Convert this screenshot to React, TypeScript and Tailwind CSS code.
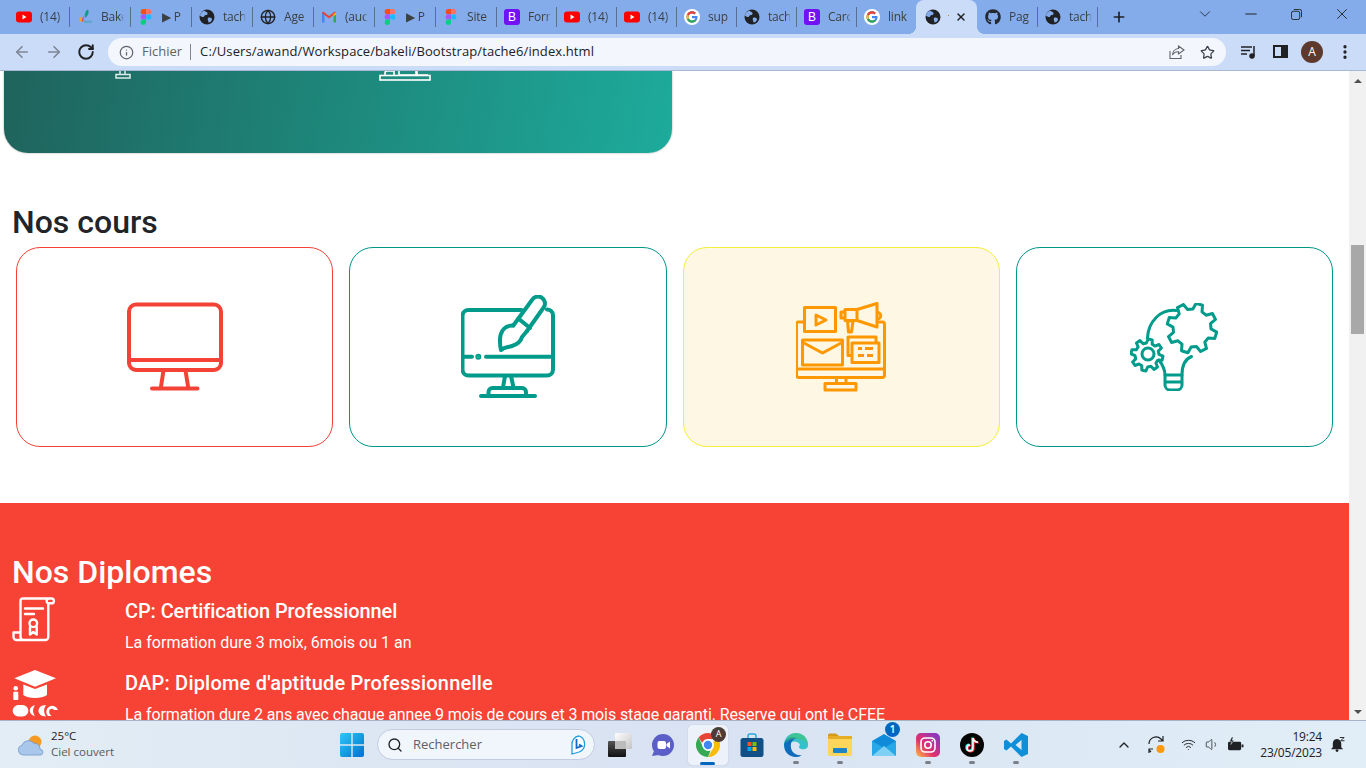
import { Globe, Info, X, Plus, ChevronDown, ChevronUp, Minus, ArrowLeft, ArrowRight, RotateCw, Star, Search, MoreVertical, Wifi, Volume1 } from "lucide-react";
import { FaGithub } from "react-icons/fa";
import type { ReactNode } from "react";

const UI = "font-['Open_Sans','Noto_Sans',sans-serif]";

function YouTube() {
  return (
    <svg viewBox="0 0 16 16" className="w-4 h-4">
      <rect x="0" y="2.5" width="16" height="11" rx="3" fill="#f00" />
      <path d="M6.5 5.5 L10.5 8 L6.5 10.5 Z" fill="#fff" />
    </svg>
  );
}

function FigmaIcon() {
  return (
    <svg viewBox="0 0 16 16" className="w-4 h-4">
      <path d="M5.3 0 H8 V5.3 H5.3 a2.65 2.65 0 0 1 0-5.3Z" fill="#f24e1e" />
      <path d="M8 0 h2.7 a2.65 2.65 0 0 1 0 5.3 H8Z" fill="#ff7262" />
      <path d="M5.3 5.3 H8 V10.6 H5.3 a2.65 2.65 0 0 1 0-5.3Z" fill="#a259ff" />
      <circle cx="10.7" cy="8" r="2.65" fill="#1abcfe" />
      <path d="M5.3 10.6 H8 v2.7 a2.65 2.65 0 1 1-2.7-2.7Z" fill="#0acf83" />
    </svg>
  );
}

function DarkGlobe() {
  return (
    <svg viewBox="0 0 16 16" className="w-4 h-4">
      <circle cx="8" cy="8" r="7.5" fill="#202124" />
      <path d="M5 1.5 C7 3 9 3 8.5 5 C8 6.5 5.5 5.5 5 7.5 C4.5 9 2 7 1 7 L1.5 4 Z" fill="#85ACEA" />
      <path d="M9 9 C11 8 13 9 13 10.5 C12.5 12.5 10.5 14 9.5 13.5 C9.5 11.5 8 10.5 9 9Z" fill="#85ACEA" />
    </svg>
  );
}

function Bakeli() {
  return (
    <svg viewBox="0 0 16 16" className="w-4 h-4">
      <path d="M8 9 C7 5 9 1 11 0.5 C12.5 3 11 7 8 9Z" fill="#0f9d84" />
      <path d="M3 9 C4.5 7 5.5 8 5 11 L4 13 C3 12 2.5 11 3 9Z" fill="#f2a51f" />
      <path d="M6 7 C7 9 6.5 11 6 13 L5 12Z" fill="#e53935" />
      <rect x="7" y="11.5" width="8" height="2.6" fill="#5aa5c9" opacity="0.8" />
    </svg>
  );
}

function Gmail() {
  return (
    <svg viewBox="0 0 16 16" className="w-4 h-4">
      <path d="M1 13.5 V4 L3.5 5 V13.5Z" fill="#4285f4" />
      <path d="M12.5 13.5 V5 L15 4 V13.5Z" fill="#34a853" />
      <path d="M1 4 Q1 2.2 2.6 2.8 L8 7 L13.4 2.8 Q15 2.2 15 4 L12.5 6 L8 9.5 L3.5 6Z" fill="#ea4335" />
      <path d="M12.5 5 L15 3.4 V5.5 L12.5 7.4Z" fill="#fbbc04" />
    </svg>
  );
}

function Bootstrap() {
  return (
    <div className="w-4 h-4 rounded-[3px] bg-[#7211f3] flex items-center justify-center text-white text-[12px] leading-none font-medium font-['Liberation_Sans',sans-serif]">
      B
    </div>
  );
}

function Google() {
  return (
    <svg viewBox="0 0 16 16" className="w-4 h-4">
      <circle cx="8" cy="8" r="8" fill="#fff" />
      <path d="M8 6.9 V9.2 H11.4 C11.1 10.5 9.9 11.4 8 11.4 C6.1 11.4 4.6 9.9 4.6 8 C4.6 6.1 6.1 4.6 8 4.6 C8.9 4.6 9.6 4.9 10.2 5.4 L11.9 3.8 C10.9 2.9 9.6 2.3 8 2.3 C4.9 2.3 2.4 4.9 2.4 8 C2.4 11.1 4.9 13.7 8 13.7 C11.3 13.7 13.5 11.4 13.5 8.1 C13.5 7.7 13.5 7.3 13.4 6.9Z" fill="#4285f4" />
      <path d="M3 5.4 L4.9 6.8 C5.4 5.5 6.6 4.6 8 4.6 C8.9 4.6 9.6 4.9 10.2 5.4 L11.9 3.8 C10.9 2.9 9.6 2.3 8 2.3 C5.8 2.3 3.9 3.5 3 5.4Z" fill="#ea4335" />
      <path d="M3 10.6 C3.9 12.5 5.8 13.7 8 13.7 C9.6 13.7 10.9 13.2 11.8 12.3 L10 10.8 C9.5 11.2 8.8 11.4 8 11.4 C6.6 11.4 5.4 10.5 4.9 9.2Z" fill="#34a853" />
      <path d="M3 5.4 C2.6 6.2 2.4 7.1 2.4 8 C2.4 8.9 2.6 9.8 3 10.6 L4.9 9.2 C4.7 8.8 4.6 8.4 4.6 8 C4.6 7.6 4.7 7.2 4.9 6.8Z" fill="#fbbc05" />
    </svg>
  );
}

type TabData = { icon: ReactNode; label: string; w: string };

const tabs: TabData[] = [
  { icon: <YouTube />, label: "(14)", w: "w-[61px]" },
  { icon: <Bakeli />, label: "Bake", w: "w-[61px]" },
  { icon: <FigmaIcon />, label: "▶ P", w: "w-[61px]" },
  { icon: <DarkGlobe />, label: "tach", w: "w-[61px]" },
  { icon: <Globe className="w-4 h-4 text-[#202124]" strokeWidth={2} />, label: "Age", w: "w-[61px]" },
  { icon: <Gmail />, label: "(auc", w: "w-[61px]" },
  { icon: <FigmaIcon />, label: "▶ P", w: "w-[61px]" },
  { icon: <FigmaIcon />, label: "Site", w: "w-[61px]" },
  { icon: <Bootstrap />, label: "Forr", w: "w-[60px]" },
  { icon: <YouTube />, label: "(14)", w: "w-[60px]" },
  { icon: <YouTube />, label: "(14)", w: "w-[60px]" },
  { icon: <Google />, label: "sup", w: "w-[60px]" },
  { icon: <DarkGlobe />, label: "tach", w: "w-[60px]" },
  { icon: <Bootstrap />, label: "Carc", w: "w-[60px]" },
  { icon: <Google />, label: "link", w: "w-[60px]" },
];

function Tab({ icon, label, w, last }: TabData & { last?: boolean }) {
  return (
    <div className={`${w} h-[34px] flex items-center pl-2 shrink-0 relative`}>
      <div className="w-4 h-4 shrink-0">{icon}</div>
      <div className="ml-2 w-[23px] overflow-hidden whitespace-nowrap text-[12px] tracking-[-0.2px] text-[#3c4043] [mask-image:linear-gradient(to_right,black_80%,transparent)]">
        {label}
      </div>
      {!last && <div className="absolute right-[-1px] top-[7px] h-5 w-px bg-[#5a6f8f]" />}
    </div>
  );
}

function TabStrip() {
  return (
    <div className="h-[34px] bg-[#85acea] flex pl-2 shrink-0">
      {tabs.map((t, i) => (
        <Tab key={i} {...t} last={i === tabs.length - 1} />
      ))}
      <div className="w-[61px] h-[34px] shrink-0 bg-[#cbdcf8] rounded-t-lg relative flex items-center pl-[9px]">
        <div className="absolute -left-2 bottom-0 w-2 h-2 bg-[radial-gradient(circle_at_0_0,#85acea_8px,#cbdcf8_8px)]" />
        <div className="absolute -right-2 bottom-0 w-2 h-2 bg-[radial-gradient(circle_at_100%_0,#85acea_8px,#cbdcf8_8px)]" />
        <DarkGlobe />
        <div className="absolute left-[32px] top-[15px] w-px h-px bg-[#c8742c]" />
        <X className="absolute left-[39px] top-[11px] w-[12px] h-[12px] text-[#202124]" strokeWidth={3} />
      </div>
      <Tab icon={<FaGithub className="w-4 h-4 text-[#24292f]" />} label="Pag" w="w-[60px]" />
      <Tab icon={<DarkGlobe />} label="tach" w="w-[60px]" />
      <Plus className="ml-[14px] mt-[9px] w-[16px] h-[16px] text-[#202124]" strokeWidth={2.5} />
      <ChevronDown className="ml-[69px] mt-[5px] w-[18px] h-[18px] text-[#2b3648]" strokeWidth={1.3} />
      <Minus className="ml-[28px] mt-[5px] w-[18px] h-[18px] text-[#202124]" strokeWidth={1.3} />
      <svg viewBox="0 0 12 12" className="ml-[31px] mt-[9px] w-[11px] h-[11px] text-[#202124]" fill="none" stroke="currentColor">
        <rect x="0.5" y="2.5" width="9" height="9" rx="2" />
        <path d="M3 0.5 H9.5 a2 2 0 0 1 2 2 V9" />
      </svg>
      <X className="ml-[31px] mt-[5px] w-[18px] h-[18px] text-[#202124]" strokeWidth={1.2} />
    </div>
  );
}

function Toolbar() {
  return (
    <div className="h-[37px] bg-[#cbdcf8] border-b border-[#a8b7d4] flex items-start shrink-0 pt-[4px]">
      <ArrowLeft className="ml-[13px] mt-[5px] w-[18px] h-[18px] text-[#7d8596]" strokeWidth={2.2} />
      <ArrowRight className="ml-[14px] mt-[5px] w-[18px] h-[18px] text-[#7d8596]" strokeWidth={2.2} />
      <RotateCw className="ml-[14px] mt-[5px] w-[18px] h-[18px] text-[#202124]" strokeWidth={2.6} />
      <div className="ml-[13px] w-[1118px] h-[28px] bg-[#f3f6fc] rounded-full flex items-center pl-[11px] relative">
        <Info className="w-[15px] h-[15px] text-[#5f6368]" strokeWidth={2} />
        <span className="ml-[8px] text-[13px] text-[#5f6368]">Fichier</span>
        <div className="ml-[8px] w-px h-[16px] bg-[#80868b]" />
        <span className="ml-[9px] text-[13px] tracking-[0.1px] text-[#202124]">C:/Users/awand/Workspace/bakeli/Bootstrap/tache6/index.html</span>
        <svg viewBox="0 0 16 16" className="absolute right-[41px] top-[6px] w-4 h-4 text-[#5f6368]" fill="none" stroke="currentColor" strokeWidth="1.1">
          <path d="M1 7 V14.5 H12 V11" />
          <path d="M9.5 2 L15 6 L9.5 10 V7.7 C6.5 7.5 4.5 9 3.5 11 C3.5 7.5 6 4.8 9.5 4.5Z" />
        </svg>
        <Star className="absolute right-[11px] top-[7px] w-[15px] h-[15px] text-[#3c4043]" strokeWidth={2} />
      </div>
      <svg viewBox="0 0 16 16" className="ml-[14px] mt-[6px] w-4 h-4 text-[#202124]" fill="none" stroke="currentColor" strokeWidth="1.5">
        <path d="M1 3 H12 M1 6.5 H10 M1 10 H7 M14 2 V12" />
        <circle cx="12" cy="12" r="2" fill="currentColor" />
      </svg>
      <div className="ml-[17px] mt-[7px] w-[15px] h-[13px] border-2 border-[#202124] flex justify-end">
        <div className="w-[5px] bg-[#202124]" />
      </div>
      <div className="ml-[13px] mt-[3px] w-[22px] h-[22px] rounded-full bg-[#5e3a2e] text-white text-[12px] flex items-center justify-center">A</div>
      <MoreVertical className="ml-[13px] mt-[5px] w-[18px] h-[18px] text-[#202124]" strokeWidth={2.4} />
    </div>
  );
}

function MonitorIcon() {
  return (
    <svg width="96" height="90" viewBox="0 0 96 90" fill="none" stroke="#f44336" strokeWidth="4" strokeLinecap="round" strokeLinejoin="round">
      <rect x="2" y="2.5" width="92" height="65.5" rx="7" />
      <path d="M2 58 H94" />
      <path d="M36.5 68.5 L33.8 86 M58.5 68.5 L61.3 86 M25 86.5 H70.5" />
    </svg>
  );
}

function DesignIcon() {
  return (
    <svg width="94" height="104" viewBox="0 0 94 104" fill="none" stroke="#009b8a" strokeWidth="4" strokeLinecap="round" strokeLinejoin="round">
      <path d="M60.5 15 H7.5 a6 6 0 0 0-6 6 V74.5 a6 6 0 0 0 6 6 H86 a6 6 0 0 0 6-6 V20 a6 6 0 0 0-6-5.5" />
      <path d="M2 61.7 H11 M25 61.7 H92" />
      <circle cx="17.3" cy="61.7" r="1" fill="#009b8a" />
      <path d="M44 81 L42 92.5 M50 81 L52.5 92.5" />
      <path d="M27.5 100.5 V97 a4 4 0 0 1 4-4 H61 a4 4 0 0 1 4 4 V100.5" />
      <path d="M20 101 H74" />
      <path d="M52.3 30.5 L71 5 a6.4 6.4 0 0 1 12 7 L66 36" />
      <path d="M57.3 23.5 L69 33" />
      <path d="M52.3 30.5 C44 30 39.5 36 39 44 C38.8 49 39.2 52 40 55 C43 52 46.5 52.5 51 51 C57 49 60 46 61 42 L66 36" />
    </svg>
  );
}

function MarketingIcon() {
  return (
    <svg width="90" height="90" viewBox="0 0 90 90" fill="none" stroke="#ff9800" strokeWidth="3" strokeLinejoin="round">
      <path d="M7 20 H2.5 a2 2 0 0 0-2 2 V73 a2.5 2.5 0 0 0 2.5 2.5 H86 a2.5 2.5 0 0 0 2.5-2.5 V22 a2 2 0 0 0-2-2 H82" />
      <path d="M1 67 H88" />
      <path d="M40.5 76 V82 M50 76 V82" />
      <rect x="29" y="81.5" width="31" height="6.5" />
      <rect x="8.5" y="5.5" width="31" height="24" />
      <path d="M20 13 L30 18 L20 23Z" />
      <path d="M49 7.5 H61 L81 1.5 V25 L61 18.5 H49Z" />
      <path d="M61 8 V18" />
      <path d="M49 10 H45 V16 H49" />
      <path d="M81.5 10.5 a3.2 3.2 0 0 1 0 6.5" />
      <path d="M51.5 19 H57 L55.5 30 H52.5Z" />
      <rect x="6.5" y="38" width="40" height="25" />
      <path d="M7 40.5 L26.5 51 L46 40.5" />
      <path d="M55.5 53.5 H52 V35 H80 V41" />
      <rect x="56" y="41" width="27" height="19.5" />
      <path d="M62 46.5 H66 M69 46.5 H77 M62 53.5 H68 M71 53.5 H77" />
    </svg>
  );
}

function gear(cx: number, cy: number, r1: number, r2: number, n: number, rot = 0) {
  const pts: string[] = [];
  for (let i = 0; i < n; i++) {
    const a = rot + (i / n) * Math.PI * 2;
    const s = (Math.PI * 2) / n;
    [[-0.32, r2], [-0.17, r1], [0.17, r1], [0.32, r2]].forEach(([o, r]) => {
      const t = a + o * s;
      pts.push(`${(cx + Math.cos(t) * r).toFixed(1)},${(cy + Math.sin(t) * r).toFixed(1)}`);
    });
  }
  return pts.join(" ");
}

function IdeaIcon() {
  return (
    <svg width="88" height="88" viewBox="0 0 88 88" fill="none" stroke="#009b8a" strokeWidth="3" strokeLinecap="round" strokeLinejoin="round">
      <polygon points={gear(62, 25, 25, 19, 8, 0.3)} fill="#fff" />
      <polygon points={gear(17, 52, 16, 12, 8, 0.2)} />
      <path d="M46 7.5 C30 6 18 19 17.5 35" />
      <circle cx="18" cy="51" r="6" />
      <path d="M29 57 C32 61 35 65 35 72 M61.5 53.5 C55 56 52 63 52 72" />
      <path d="M35 72 H52 V82 a5 5 0 0 1-5 5 H40 a5 5 0 0 1-5-5Z M35 79 H52" />
    </svg>
  );
}

function DiplomaIcon() {
  return (
    <svg width="44" height="46" viewBox="0 0 44 46" fill="none" stroke="#fff" strokeWidth="2.4" strokeLinecap="round" strokeLinejoin="round" className="-mt-[2px]">
      <path d="M8.5 35 V4 a2.5 2.5 0 0 1 2.5-2.5 H39.5 a2.4 2.4 0 0 1 0 4.8 H36.3 V40 a3 3 0 0 1-3 3 H4.5 a3 3 0 0 1-3-3 V35.5 H8.5 M36 1.8 a2.5 2.5 0 0 0 0 4.5 M8.5 35.5 V40 a3 3 0 0 0 3 3" />
      <path d="M13 11.5 H31 M13 17 H22" />
      <circle cx="21.3" cy="26.3" r="3.8" />
      <path d="M18 30 V37.5 L21.3 35 L24.7 37.5 V30" />
    </svg>
  );
}

function GradIcon() {
  return (
    <svg width="50" height="52" viewBox="0 0 50 52" fill="#fff" className="-mt-[3px]">
      <path d="M2.3 10.3 L23 2 L44 10.3 L23 18.7Z" />
      <path d="M11.3 16.5 L23 21 L35 16.5 V27 C30 31 16 31 11.3 27Z" />
      <circle cx="3.7" cy="20.3" r="2.3" />
      <rect x="1.3" y="23.7" width="5" height="8.3" rx="1" />
      <rect x="0.7" y="37" width="15.6" height="11.5" rx="5.7" />
      <path d="M23 37 C16 39 16 46 23 48.5 C20.5 44 20.5 41 23 37Z M34 37 C24 37 24 48.5 34 48.5 C31.5 44 31.5 41 34 37Z" />
      <path d="M36 48 a6 6 0 1 1 10 -6 h-4 a3 3 0 0 0-4 -0.5 c-2 2 0 6 2 6.5Z" />
    </svg>
  );
}

function CourseCard({ border, bg, children }: { border: string; bg?: string; children: ReactNode }) {
  return (
    <div className={`h-[200px] rounded-[24px] border flex items-center justify-center ${border} ${bg ?? "bg-white"}`}>
      {children}
    </div>
  );
}

function Diplome({ icon, title, text, titleCls, textCls }: { icon: ReactNode; title: string; text: string; titleCls: string; textCls: string }) {
  return (
    <div className="flex">
      <div className="w-[113px] shrink-0">{icon}</div>
      <div>
        <h3 className={`text-[20px] leading-[24px] font-medium ${titleCls}`}>{title}</h3>
        <p className={`mt-[8px] text-[16px] leading-[24px] whitespace-nowrap ${textCls}`}>{text}</p>
      </div>
    </div>
  );
}

function Page() {
  return (
    <div className="flex-1 overflow-hidden bg-white text-[#212529] font-['Roboto',sans-serif]">
      <div className="ml-[4px] w-[668px] h-[82px] rounded-b-[24px] bg-[linear-gradient(100deg,#1f635c,#1dab9b)] shadow-[0_0_2px_rgba(0,0,0,0.4)] flex items-start">
        <svg width="20" height="8" viewBox="0 0 20 8" className="ml-[109px]" fill="none" stroke="#dfecea" strokeWidth="1.5">
          <path d="M7 0 V3 M12 0 V3" />
          <rect x="3" y="3.5" width="14" height="3.5" />
        </svg>
        <svg width="52" height="10" viewBox="0 0 52 10" className="ml-[246px]" fill="none" stroke="#fff" strokeWidth="1.6">
          <path d="M6 4 V2 a2 2 0 0 1 2-2 H15 V4 M20 0 V4 H37 V0 M38 0 V4 H49" />
          <rect x="1" y="4.5" width="50" height="4.5" />
        </svg>
      </div>
      <h2 className="mt-[50px] ml-[12px] text-[32px] leading-[38px] font-medium">Nos cours</h2>
      <div className="grid grid-cols-4 gap-4 pl-4 pr-4 mt-[6px]">
        <CourseCard border="border-[#f44336]"><MonitorIcon /></CourseCard>
        <CourseCard border="border-[#009688]"><DesignIcon /></CourseCard>
        <CourseCard border="border-[#f5ee3a]" bg="bg-[#fdf7e3]"><MarketingIcon /></CourseCard>
        <CourseCard border="border-[#009688]"><IdeaIcon /></CourseCard>
      </div>
      <section className="mt-[56px] bg-[#f64335] text-white pt-[50px] pl-[12px] h-[300px]">
        <h2 className="text-[32px] leading-[38px] font-medium">Nos Diplomes</h2>
        <div className="mt-[8px] flex flex-col gap-[16px]">
          <Diplome icon={<DiplomaIcon />} title="CP: Certification Professionnel" titleCls="tracking-[-0.1px]" text="La formation dure 3 moix, 6mois ou 1 an" textCls="" />
          <Diplome icon={<GradIcon />} title="DAP: Diplome d'aptitude Professionnelle" titleCls="tracking-[0.2px]" text="La formation dure 2 ans avec chaque annee 9 mois de cours et 3 mois stage garanti. Reserve qui ont le CFEE" textCls="tracking-[-0.1px]" />
        </div>
      </section>
    </div>
  );
}

function Scrollbar() {
  return (
    <div className="w-[17px] bg-[#f1f1f1] shrink-0 flex flex-col items-center relative">
      <div className="absolute top-[8px] w-0 h-0 border-x-[4px] border-x-transparent border-b-[4px] border-b-[#505050]" />
      <div className="mt-[174px] w-[13px] h-[89px] bg-[#a8a8a8]" />
      <div className="absolute bottom-[6px] w-0 h-0 border-x-[4px] border-x-transparent border-t-[4px] border-t-[#505050]" />
    </div>
  );
}

function TaskSlot({ children, dot, active }: { children: ReactNode; dot?: boolean; active?: boolean }) {
  return (
    <div className={`w-[40px] h-[40px] mr-[4px] rounded-[4px] relative flex items-center justify-center ${active ? "bg-[#edf2fa] shadow-[0_0_1px_rgba(0,0,0,0.3)]" : ""}`}>
      {children}
      {dot && <div className="absolute bottom-[1px] left-[17px] w-[6px] h-[3px] rounded-full bg-[#7b7f87]" />}
      {active && <div className="absolute bottom-0 left-[12px] w-[15px] h-[3px] rounded-full bg-[#0067c0]" />}
    </div>
  );
}

function Taskbar() {
  return (
    <div className="h-[48px] shrink-0 border-t border-[#aab2c6] bg-[linear-gradient(to_right,#e2edf5,#d8e2f2_50%,#e1eef7)] flex items-center relative">
      <svg viewBox="0 0 26 24" className="ml-[18px] w-[26px] h-[24px]">
        <circle cx="17" cy="9" r="6.5" fill="#f59a23" />
        <path d="M5 22 a5 5 0 0 1-1-9.8 a7 7 0 0 1 12-2 a5.5 5.5 0 0 1 6 6 a3 3 0 0 1 1 5.8Z" fill="#a9c7ea" stroke="#6f97ca" strokeWidth="0.8" />
      </svg>
      <div className="ml-[7px] w-[100px] text-[11.5px] leading-[16px] -mt-[1px]">
        <div className="text-[#1b1b1b]">25°C</div>
        <div className="text-[#555b61]">Ciel couvert</div>
      </div>
      <svg viewBox="0 0 24 24" className="ml-[189px] w-[24px] h-[24px]">
        <defs>
          <linearGradient id="win" x1="0" y1="0" x2="1" y2="1">
            <stop offset="0" stopColor="#2ccaf5" />
            <stop offset="1" stopColor="#0170cf" />
          </linearGradient>
        </defs>
        <path d="M0 2 a2 2 0 0 1 2-2 H11.3 V11.3 H0Z M12.7 0 H22 a2 2 0 0 1 2 2 V11.3 H12.7Z M0 12.7 H11.3 V24 H2 a2 2 0 0 1-2-2Z M12.7 12.7 H24 V22 a2 2 0 0 1-2 2 H12.7Z" fill="url(#win)" />
      </svg>
      <div className="ml-[13px] w-[218px] h-[31px] rounded-full bg-[#f1f5fc] border border-[#c2cbe0] flex items-center pl-[9px] relative">
        <Search className="w-[16px] h-[16px] text-[#202124]" strokeWidth={2} />
        <span className="ml-[10px] text-[13px] text-[#5d6065]">Rechercher</span>
        <svg viewBox="0 0 20 20" className="absolute right-[5px] top-[5px] w-[20px] h-[20px]" fill="none">
          <path d="M10 1 a8.5 8.5 0 0 1 0 16 L3 19 V10 A8 8 0 0 1 10 1Z" fill="#fff" stroke="#1b9de2" strokeWidth="1.3" />
          <path d="M7.5 4 V13 L12.5 11 L10 9.5" stroke="#1668c6" strokeWidth="1.8" />
        </svg>
      </div>
      <div className="ml-[13px] w-[24px] h-[24px] relative mr-[11px]">
        <div className="absolute right-0 top-0 w-[17px] h-[16px] bg-gradient-to-br from-white to-[#c4c4c4] rounded-[1px]" />
        <div className="absolute left-0 bottom-0 w-[18px] h-[16px] bg-gradient-to-b from-[#555] to-[#111] rounded-[1px]" />
        <div className="absolute left-[7px] top-[8px] w-[11px] h-[8px] bg-[#bbb]" />
      </div>
      <svg viewBox="0 0 24 24" className="w-[24px] h-[24px] ml-[8px] mr-[13px]">
        <circle cx="12" cy="12" r="11" fill="#5b5ec7" />
        <path d="M1 23 L3 18 L8 22Z" fill="#5b5ec7" />
        <rect x="6.5" y="8" width="8.5" height="8" rx="2" fill="#fff" />
        <path d="M15.5 11 L19 8.5 V15.5 L15.5 13Z" fill="#fff" />
      </svg>
      <TaskSlot active>
        <svg viewBox="0 0 24 24" className="w-[24px] h-[24px]">
          <path d="M12 0 a12 12 0 0 1 10.4 6 H12 a6 6 0 0 0-5.7 4 L2.6 4.6 A12 12 0 0 1 12 0Z" fill="#ea4335" />
          <path d="M22.4 6 A12 12 0 0 1 12 24 l4.9-8.5 A6 6 0 0 0 17 9 Z" fill="#fbbc04" />
          <path d="M12 24 A12 12 0 0 1 2.6 4.6 L7.5 15 a6 6 0 0 0 7 2.5Z" fill="#34a853" />
          <circle cx="12" cy="12" r="5" fill="#4285f4" stroke="#fff" strokeWidth="1.6" />
        </svg>
        <div className="absolute right-[2px] top-[2px] w-[15px] h-[15px] rounded-full bg-[#4e3b35] text-white text-[9px] flex items-center justify-center">A</div>
      </TaskSlot>
      <TaskSlot>
        <svg viewBox="0 0 24 24" className="w-[24px] h-[24px]">
          <path d="M8 5 V3 a2 2 0 0 1 2-2 H14 a2 2 0 0 1 2 2 V5" fill="none" stroke="#2ea7d8" strokeWidth="1.5" />
          <rect x="0.5" y="5" width="23" height="19" rx="2.5" fill="#114f87" />
          <rect x="7.5" y="9" width="4" height="4" fill="#f35325" />
          <rect x="12.5" y="9" width="4" height="4" fill="#81bc06" />
          <rect x="7.5" y="14" width="4" height="4" fill="#05a6f0" />
          <rect x="12.5" y="14" width="4" height="4" fill="#ffba08" />
        </svg>
      </TaskSlot>
      <TaskSlot dot>
        <svg viewBox="0 0 24 24" className="w-[24px] h-[24px]">
          <path d="M12 0 C19 0 24 5 24 12 C24 16 20 17 17 16 C14 15 15 13 16 12 C15 8 8 7 5 11 C3 14 5 20 9 23 C4 22 0 18 0 12 C0 5 5 0 12 0Z" fill="#35c1c9" />
          <path d="M0 12 C1 5 8 3 13 5 C9 6 6 9 7 15 C8 20 13 23 18 22 C13 26 4 24 1 17Z" fill="#0f6cbd" />
          <path d="M12 0 C19 0 24 5 24 12 C22 8 17 6 13 6 C9 5 4 7 1.5 10 C3 4 7 0 12 0Z" fill="#43c96e" opacity="0.55" />
        </svg>
      </TaskSlot>
      <TaskSlot dot>
        <svg viewBox="0 0 24 24" className="w-[24px] h-[24px]">
          <path d="M0 2 a1.5 1.5 0 0 1 1.5-1.5 H8 L11 3 H0Z" fill="#d39b1a" />
          <rect x="0" y="3" width="24" height="4" fill="#e7ae24" />
          <path d="M0 6 H24 V21 a2 2 0 0 1-2 2 H2 a2 2 0 0 1-2-2Z" fill="#fbd65a" />
          <rect x="5" y="15" width="14" height="5" rx="1" fill="#1d84c8" />
        </svg>
      </TaskSlot>
      <TaskSlot>
        <svg viewBox="0 0 24 24" className="w-[24px] h-[24px]">
          <path d="M0 8 L12 1 L24 8 V23 H0Z" fill="#0f8bd9" />
          <path d="M0 8 L12 15 L24 8 L24 23 L0 23Z" fill="#27a8e8" />
          <path d="M0 23 L12 13 L24 23Z" fill="#7ed0f5" />
        </svg>
        <div className="absolute right-[4px] top-[-3px] w-[15px] h-[15px] rounded-full bg-[#0067c0] text-white text-[10px] font-semibold flex items-center justify-center">1</div>
      </TaskSlot>
      <TaskSlot dot>
        <svg viewBox="0 0 24 24" className="w-[24px] h-[24px]" fill="none">
          <defs>
            <linearGradient id="ig" x1="0" y1="1" x2="1" y2="0">
              <stop offset="0" stopColor="#fdc13f" />
              <stop offset="0.4" stopColor="#e1306c" />
              <stop offset="1" stopColor="#7a39d1" />
            </linearGradient>
          </defs>
          <rect width="24" height="24" rx="5" fill="url(#ig)" />
          <rect x="5" y="5" width="14" height="14" rx="4" stroke="#fff" strokeWidth="1.6" />
          <circle cx="12" cy="12" r="3.2" stroke="#fff" strokeWidth="1.6" />
          <circle cx="16.3" cy="7.7" r="0.9" fill="#fff" />
        </svg>
      </TaskSlot>
      <TaskSlot dot>
        <svg viewBox="0 0 24 24" className="w-[24px] h-[24px]" fill="none">
          <circle cx="12" cy="12" r="12" fill="#050505" />
          <path d="M13 5 V15 a3 3 0 1 1-3-3" stroke="#25f4ee" strokeWidth="2" transform="translate(-0.7 -0.5)" />
          <path d="M13 5 V15 a3 3 0 1 1-3-3 M13 5 C13.5 7.5 15 9 18 9.2" stroke="#fe2c55" strokeWidth="2" transform="translate(0.7 0.5)" />
          <path d="M13 5 V15 a3 3 0 1 1-3-3 M13 5 C13.5 7.5 15 9 18 9.2" stroke="#fff" strokeWidth="1.5" />
        </svg>
      </TaskSlot>
      <TaskSlot dot>
        <svg viewBox="0 0 24 24" className="w-[24px] h-[24px]">
          <path d="M17.5 0 L24 3 V21 L17.5 24 L7 13.5 L2.5 17.5 L0 16 V8 L2.5 6.5 L7 10.5Z M17.5 7 L11.5 12 L17.5 17Z" fill="#0e8fd8" fillRule="evenodd" />
        </svg>
      </TaskSlot>
      <ChevronUp className="ml-[76px] w-[16px] h-[16px] text-[#202124]" strokeWidth={2} />
      <svg viewBox="0 0 20 20" className="ml-[15px] w-[20px] h-[20px]" fill="none" stroke="#202124" strokeWidth="1.2">
        <path d="M2 9 a7 7 0 0 1 12-5 l2 2 M16 1 V6 H11 M4 17 L2 15 M2 18 V14 H6" />
        <circle cx="13.5" cy="14" r="4" fill="#fb9a0c" stroke="none" />
      </svg>
      <Wifi className="ml-[14px] w-[15px] h-[15px] text-[#2a2f36]" strokeWidth={1.6} />
      <Volume1 className="ml-[9px] w-[15px] h-[15px] text-[#2a2f36]" strokeWidth={1.3} />
      <svg viewBox="0 0 18 16" className="ml-[7px] w-[17px] h-[15px]" fill="none">
        <rect x="1" y="5" width="14" height="9" rx="1.5" fill="#202124" />
        <rect x="15.5" y="8" width="2" height="3" fill="#202124" />
        <path d="M5 0 L2.5 5 H5 L4 8 L7.5 3.5 H5.5 L6.5 0Z" fill="#202124" stroke="#e1eef7" strokeWidth="0.5" />
      </svg>
      <div className="ml-[8px] w-[70px] text-right text-[12px] leading-[16px] tracking-[-0.2px] text-[#202124]">
        <div>19:24</div>
        <div>23/05/2023</div>
      </div>
      <svg viewBox="0 0 16 16" className="ml-[8px] w-[15px] h-[15px]" fill="#202124">
        <path d="M7 2 a5 5 0 0 1 5 5 V11 L14 13 H1 L3 11 V7 a5 5 0 0 1 4-5Z" />
        <circle cx="7.5" cy="14.5" r="1.5" />
        <path d="M10.5 0.5 H15 L11.5 4 H15.5" stroke="#202124" fill="none" strokeWidth="1" />
      </svg>
    </div>
  );
}

export default function App() {
  return (
    <div className={`w-[1366px] h-screen overflow-hidden flex flex-col ${UI}`}>
      <TabStrip />
      <Toolbar />
      <div className="flex flex-1 min-h-0">
        <Page />
        <Scrollbar />
      </div>
      <Taskbar />
    </div>
  );
}
